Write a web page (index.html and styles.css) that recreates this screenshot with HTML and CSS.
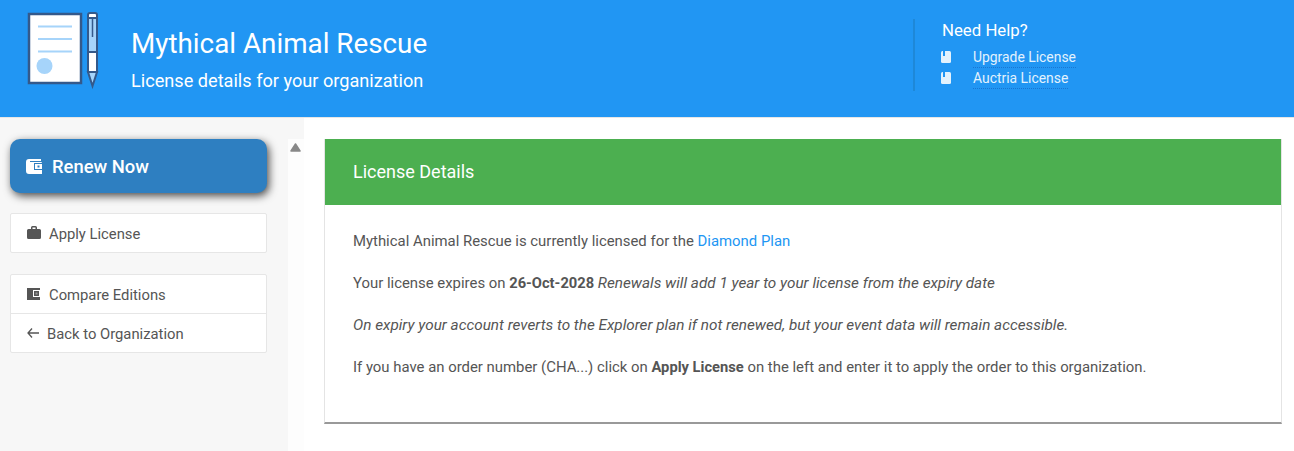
FILE: index.html
```html
<!DOCTYPE html>
<html lang="en">
<head>
  <meta charset="UTF-8" />
  <title>License Details</title>
  <link rel="stylesheet" href="styles.css">
</head>
<body>
  <header class="top">
    <svg class="logo" width="80" height="90" viewBox="0 0 80 90">
      <rect x="5" y="4" width="52" height="69" fill="#fff" stroke="#34598a" stroke-width="2.500"/>
      <path d="M14 16.500h34M14 29h34M14 41.500h34" stroke="#a6d4fa" stroke-width="2"/>
      <circle cx="20.500" cy="56" r="8" fill="#a6d4fa"/>
      <path d="M64 5q0-2 2-2h5q2 0 2 2v3h-9z" fill="#fff" stroke="#34598a" stroke-width="2"/>
      <rect x="64" y="8" width="9" height="34" fill="#a6d4fa" stroke="#34598a" stroke-width="2"/>
      <rect x="64" y="42" width="9" height="20" fill="#fff" stroke="#34598a" stroke-width="2"/>
      <path d="M64 62h9l-4.500 14z" fill="#a6d4fa" stroke="#34598a" stroke-width="2"/>
      <path d="M68.500 8v19" stroke="#34598a" stroke-width="1.500"/>
    </svg>
    <div class="titles">
      <h1>Mythical Animal Rescue</h1>
      <p>License details for your organization</p>
    </div>
    <div class="help">
      <h2>Need Help?</h2>
      <a href="#"><svg class="book" width="10" height="12" viewBox="0 0 10 12"><path d="M1.500 0h7Q10 0 10 1.500v9Q10 12 8.500 12h-7Q0 12 0 10.500v-9Q0 0 1.500 0z" fill="#e3f2fd"/><rect x="2" y="0" width="2" height="5" fill="#2196f3"/></svg><span>Upgrade License</span></a>
      <a href="#"><svg class="book" width="10" height="12" viewBox="0 0 10 12"><path d="M1.500 0h7Q10 0 10 1.500v9Q10 12 8.500 12h-7Q0 12 0 10.500v-9Q0 0 1.500 0z" fill="#e3f2fd"/><rect x="2" y="0" width="2" height="5" fill="#2196f3"/></svg><span>Auctria License</span></a>
    </div>
  </header>

  <div class="page">
    <aside class="side">
      <div class="side-inner">
        <a class="renew" href="#">
          <svg width="17" height="15" viewBox="0 0 17 15"><path d="M3 0h12v2H4v1h11q1 0 1 1v11H3q-3 0-3-3V3q0-3 3-3z" fill="#fff"/><rect x="8.500" y="4.500" width="8" height="6" fill="#fff" stroke="#2e7fc1"/><rect x="11.500" y="6.500" width="2" height="2" fill="#2e7fc1"/></svg>
          Renew Now
        </a>
        <div class="menu">
          <a href="#">
            <svg width="14" height="13" viewBox="0 0 14 13"><path d="M4 3V1.500Q4 0 5.500 0h3Q10 0 10 1.500V3h2.500Q14 3 14 4.500v7q0 1.500-1.500 1.500h-11Q0 13 0 11.500v-7Q0 3 1.500 3zm1.500 0h3V1.500h-3z" fill="#555" fill-rule="evenodd"/></svg>
            <span>Apply License</span>
          </a>
        </div>
        <div class="menu">
          <a href="#" class="compare">
            <svg width="13" height="12" viewBox="0 0 13 12"><path d="M0 0h13v12H0z" fill="#555"/><rect x="6.500" y="2.500" width="6" height="6" fill="#555" stroke="#fff"/><rect x="8.500" y="4.500" width="2" height="2" fill="#fff" opacity="0.400"/></svg>
            <span>Compare Editions</span>
          </a>
          <a href="#">
            <svg width="12" height="10" viewBox="0 0 12 10"><path d="M5 .5 1 5l4 4.500M1 5h11" fill="none" stroke="#555" stroke-width="1.300"/></svg>
            <span>Back to Organization</span>
          </a>
        </div>
      </div>
      <div class="gutter">
        <svg class="arrow" width="11" height="9" viewBox="0 0 11 9"><path d="M5.500 1 10 8H1z" fill="#888" stroke="#888" stroke-width="1.500" stroke-linejoin="round"/></svg>
      </div>
    </aside>
    <main class="panel">
      <div class="panel-head">License Details</div>
      <div class="panel-body">
        <p>Mythical Animal Rescue is currently licensed for the <a href="#">Diamond Plan</a></p>
        <p>Your license expires on <b>26-Oct-2028</b> <i>Renewals will add 1 year to your license from the expiry date</i></p>
        <p><i>On expiry your account reverts to the Explorer plan if not renewed, but your event data will remain accessible.</i></p>
        <p>If you have an order number (CHA...) click on <b>Apply License</b> on the left and enter it to apply the order to this organization.</p>
      </div>
    </main>
  </div>
</body>
</html>
```

FILE: styles.css
```css
:root {
  --blue: #2196f3;
  --text: #555;
}
html, body {
  height: 100%;
}
body {
  margin: 0;
  background: #fff;
  font-family: Roboto, sans-serif;
  font-size: 14px;
  color: var(--text);
  overflow: hidden;
}
.top {
  display: flex;
  height: 117px;
  background: var(--blue);
  border-bottom: 1px solid #e6e6e6;
  color: #fff;
}
.logo {
  margin: 10px 0 0 24px;
}
.titles {
  margin-left: 27px;
  width: 782px;
}
.titles h1 {
  margin: 27px 0 0;
  font-size: 27.800px;
  font-weight: 400;
  line-height: 34px;
}
.titles p {
  margin: 9px 0 0;
  font-size: 18.150px;
  line-height: 22px;
}
.help {
  align-self: flex-start;
  margin-top: 19px;
  height: 72px;
  padding-left: 26px;
  border-left: 2px solid #1e88d8;
}
.help h2 {
  margin: 2px 0 7px 1px;
  font-size: 16.800px;
  font-weight: 400;
  line-height: 19px;
}
.help a {
  display: flex;
  align-items: center;
  height: 21px;
  color: #e3f2fd;
  font-size: 13.900px;
  text-decoration: none;
}
.book {
  margin: -1px 22px 0 0;
}
.help span {
  border-bottom: 1px dotted #1976d2;
  line-height: 20px;
}
.page {
  display: flex;
  height: 333px;
}
.side {
  display: flex;
  width: 304px;
  padding-top: 21px;
  background: #f7f7f7;
}
.side-inner {
  box-sizing: border-box;
  width: 288px;
  padding: 0 21px 0 10px;
}
.renew {
  display: flex;
  align-items: center;
  gap: 9px;
  height: 54px;
  padding-left: 16px;
  background: #2e7fc1;
  border-radius: 10px;
  box-shadow: 2px 3px 8px rgba(0, 0, 0, 0.7);
  color: #fff;
  font-size: 18.400px;
  font-weight: 500;
  text-decoration: none;
}
.menu {
  margin-top: 21px;
  background: #fff;
  border: 1px solid #e6e6e6;
  border-radius: 2px;
}
.renew + .menu {
  margin-top: 20px;
}
.menu a {
  display: flex;
  align-items: center;
  gap: 8px;
  box-sizing: border-box;
  height: 38px;
  padding: 1px 0 0 16px;
  color: var(--text);
  font-size: 14.800px;
  text-decoration: none;
}
.menu a.compare {
  gap: 9px;
}
.menu a + a {
  height: 39px;
  border-top: 1px solid #e6e6e6;
}
.menu svg {
  margin-top: -2px;
}
.gutter {
  width: 16px;
  background: #fdfdfd;
}
.arrow {
  display: block;
  margin: 4px 0 0 2px;
}
.panel {
  align-self: flex-start;
  width: 956px;
  margin: 21px 0 0 20px;
  background: #fff;
  border-right: 1px solid #e4e4e4;
  border-left: 1px solid #e4e4e4;
  border-bottom: 2px solid #999;
}
.panel-head {
  height: 66px;
  padding-left: 28px;
  background: #4caf50;
  color: #fff;
  font-size: 18px;
  line-height: 66px;
}
.panel-body {
  height: 217px;
  padding: 3px 0 0 28px;
  box-sizing: border-box;
}
.panel-body p {
  margin: 0;
  padding-top: 24px;
  font-size: 14.900px;
  line-height: 18px;
}
.panel-body b {
  font-size: 14.700px;
}
.panel-body i {
  font-size: 15.300px;
}
.panel-body a {
  color: var(--blue);
  text-decoration: none;
}
```
